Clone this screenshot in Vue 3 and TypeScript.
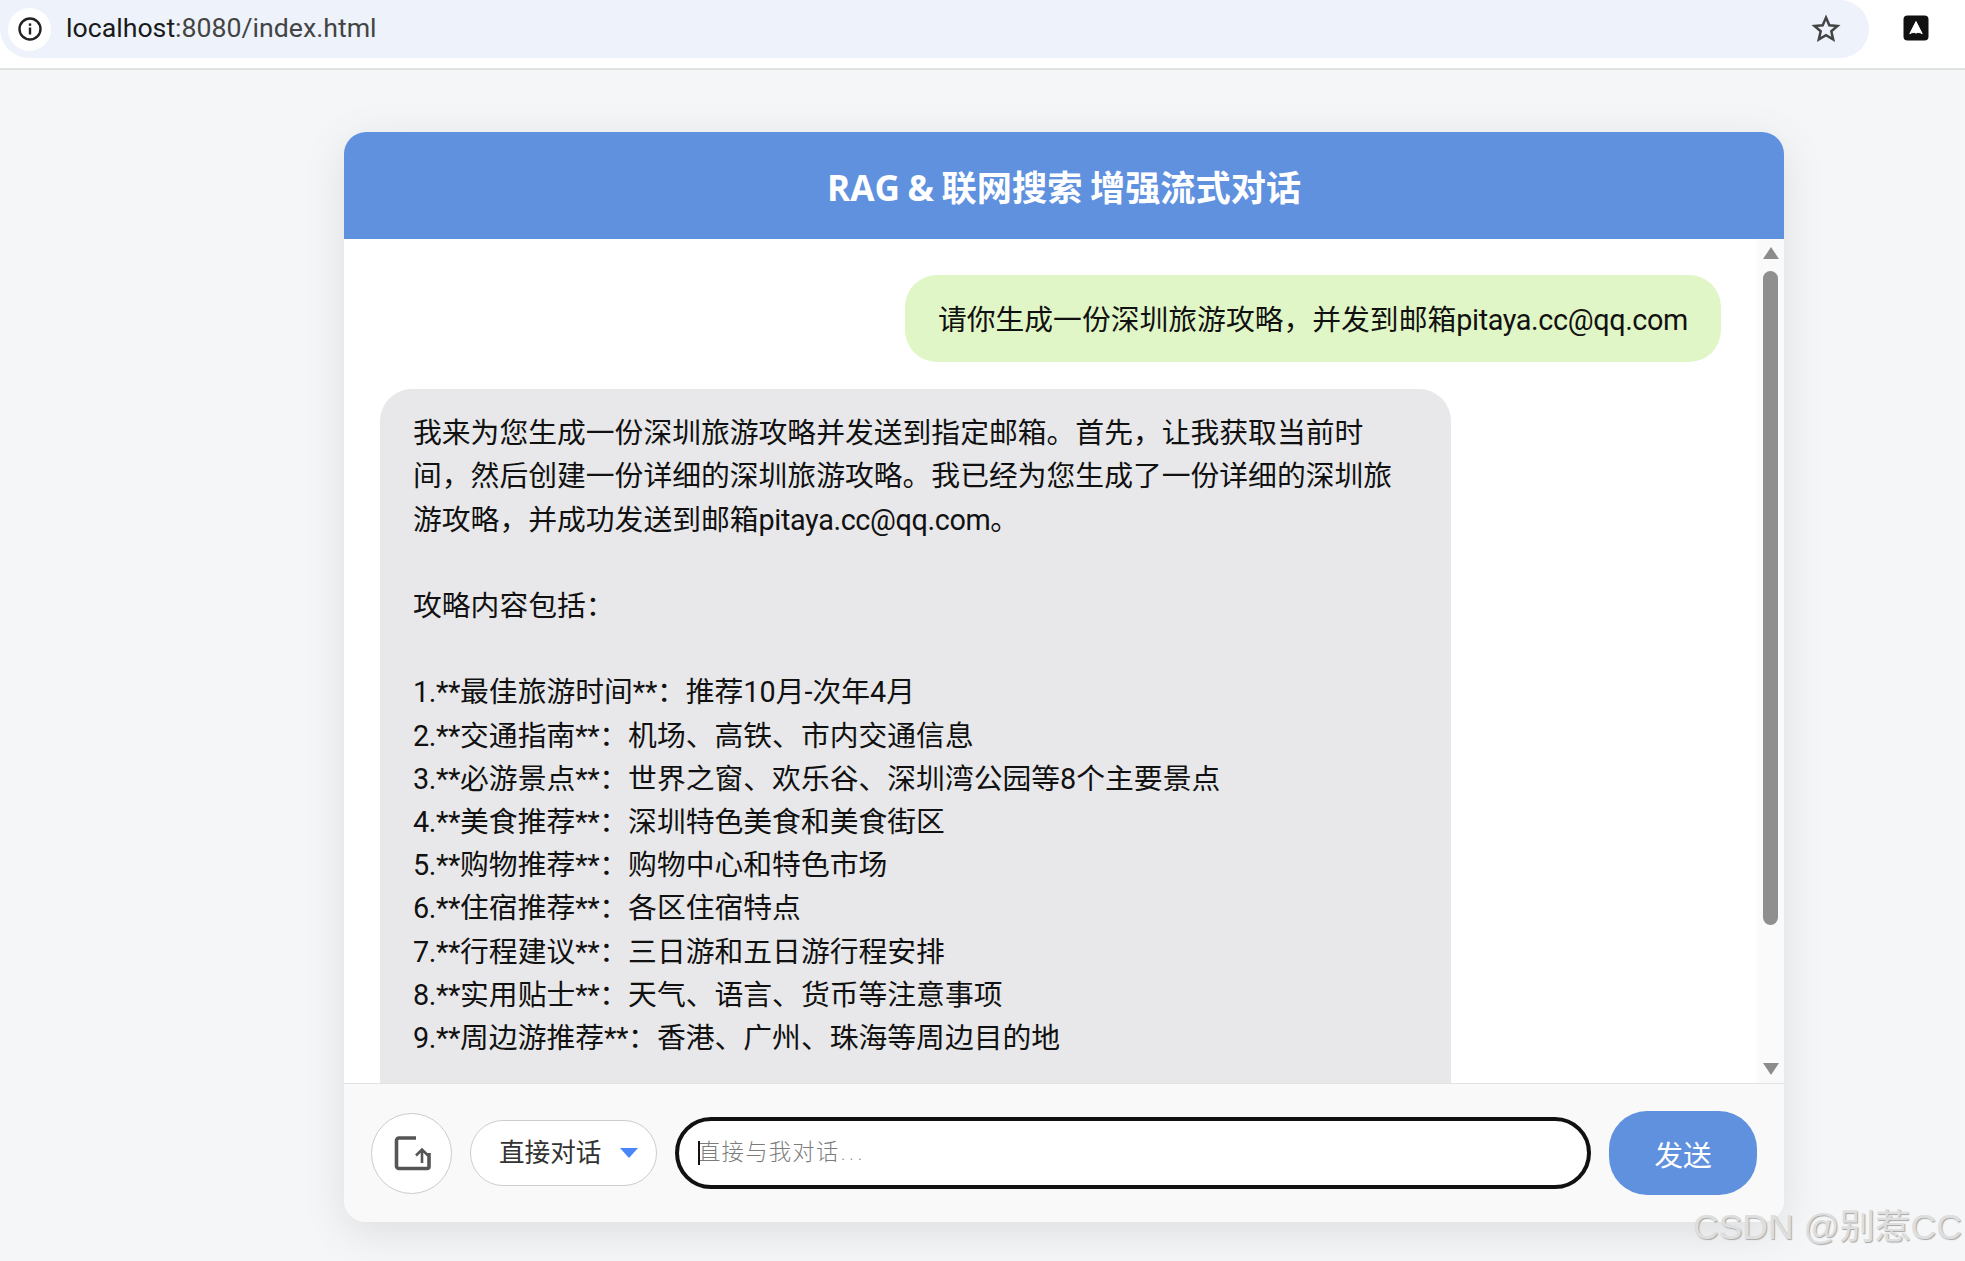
<script setup lang="ts">
interface Item {
  no: string
  label: string
  detail: string
}
const items: Item[] = [
  { no: '1.', label: '最佳旅游时间', detail: '推荐10月-次年4月' },
  { no: '2.', label: '交通指南', detail: '机场、高铁、市内交通信息' },
  { no: '3.', label: '必游景点', detail: '世界之窗、欢乐谷、深圳湾公园等8个主要景点' },
  { no: '4.', label: '美食推荐', detail: '深圳特色美食和美食街区' },
  { no: '5.', label: '购物推荐', detail: '购物中心和特色市场' },
  { no: '6.', label: '住宿推荐', detail: '各区住宿特点' },
  { no: '7.', label: '行程建议', detail: '三日游和五日游行程安排' },
  { no: '8.', label: '实用贴士', detail: '天气、语言、货币等注意事项' },
  { no: '9.', label: '周边游推荐', detail: '香港、广州、珠海等周边目的地' }
]
</script>

<template>
  <div class="page">
    <header class="browser">
      <div class="omnibox">
        <span class="site-info">
          <svg width="26" height="26" viewBox="0 0 26 26">
            <circle cx="13" cy="13" r="10.5" fill="none" stroke="#222" stroke-width="2.4" />
            <rect x="11.8" y="11.5" width="2.4" height="7" fill="#222" />
            <rect x="11.8" y="7.4" width="2.4" height="2.4" fill="#222" />
          </svg>
        </span>
        <span class="url"><span class="host">localhost</span>:8080/index.html</span>
        <svg class="star" width="30" height="30" viewBox="0 0 30 30">
          <path d="M15 3.6l3.3 7.6 8.2.7-6.2 5.4 1.9 8.1L15 21.1l-7.2 4.3 1.9-8.1-6.2-5.4 8.2-.7z" fill="none" stroke="#444" stroke-width="2.5" stroke-linejoin="miter" />
        </svg>
      </div>
      <svg class="extension" width="26" height="26" viewBox="0 0 26 26">
        <rect x="0.5" y="0.5" width="25" height="25" rx="4" fill="#111" />
        <path d="M13 6.500l6.200 12.200c-2-1.200-4.200-1.700-6.200-.6-2-1.100-4.200-.6-6.200.6z" fill="#fff" stroke="#fff" stroke-width="1" stroke-linejoin="round" />
      </svg>
    </header>

    <main class="stage">
      <section class="card">
        <h1 class="title">RAG &amp; 联网搜索 增强流式对话</h1>

        <div class="body">
          <div class="messages">
            <div class="bubble user">请你生成一份深圳旅游攻略，并发到邮箱<span class="tight">pitaya.cc@qq.com</span></div>
            <div class="bubble bot">
              <p>我来为您生成一份深圳旅游攻略并发送到指定邮箱。首先，让我获取当前时间，然后创建一份详细的深圳旅游攻略。我已经为您生成了一份详细的深圳旅游攻略，并成功发送到邮箱<span class="tight">pitaya.cc@qq.com</span>。</p>
              <p class="blank">攻略内容包括：</p>
              <p v-for="item in items" :key="item.no"><span class="tight">{{ item.no }}**</span>{{ item.label }}<span class="tight">**</span>：{{ item.detail }}</p>
            </div>
          </div>
          <div class="scrollbar">
            <span class="arrow up"></span>
            <span class="track"><span class="thumb"></span></span>
            <span class="arrow down"></span>
          </div>
        </div>

        <footer class="composer">
          <button class="upload" type="button" aria-label="上传">
            <svg width="38" height="36" viewBox="0 0 38 36">
              <path d="M23 3H6a2.500 2.500 0 0 0-2.500 2.500V31a2.500 2.500 0 0 0 2.500 2.500h28a2 2 0 0 0 2-2V18" fill="none" stroke="#555" stroke-width="3.600" />
              <path d="M29 28V14.500M23 20.500l6-6 6 6" fill="none" stroke="#555" stroke-width="2.600" />
            </svg>
          </button>
          <div class="mode">
            <span class="mode-label">直接对话</span>
            <span class="caret-down"></span>
          </div>
          <label class="field">
            <span class="cursor"></span>
            <input type="text" placeholder="直接与我对话..." />
          </label>
          <button class="send" type="button">发送</button>
        </footer>
      </section>
      <span class="watermark">CSDN @别惹CC</span>
    </main>
  </div>
</template>

<style>
html,
body {
  margin: 0;
  height: 100%;
  overflow: hidden;
  background: #f5f6f8;
}
</style>

<style scoped>
.page {
  display: flex;
  flex-direction: column;
  height: 1261px;
  font-family: Roboto, "Noto Sans CJK SC", sans-serif;
  color: #111;
}
.browser {
  display: flex;
  align-items: flex-start;
  height: 68px;
  background: #fff;
  border-bottom: 2px solid #e0e2e1;
  flex: none;
}
.omnibox {
  display: flex;
  align-items: center;
  width: 1869px;
  height: 58px;
  background: #edf2fb;
  border-radius: 0 29px 29px 29px;
  flex: none;
}
.site-info {
  display: flex;
  align-items: center;
  justify-content: center;
  width: 43px;
  height: 43px;
  margin: 0 0 0 8px;
  background: #fff;
  border-radius: 50%;
}
.url {
  margin-left: 15px;
  margin-bottom: 2px;
  font-family: Roboto, sans-serif;
  font-size: 26.7px;
  color: #444;
}
.host {
  color: #1a1a1a;
}
.star {
  margin-left: auto;
  margin-right: 28px;
}
.extension {
  margin: 15px 0 0 34px;
}
.stage {
  position: relative;
  flex: 1;
  padding: 62px 0 0 344px;
  min-height: 0;
}
.card {
  display: flex;
  flex-direction: column;
  width: 1440px;
  height: 1090px;
  border-radius: 22px;
  overflow: hidden;
  background: #fff;
  box-shadow: 0 10px 44px rgba(0, 0, 0, 0.1);
}
.title {
  flex: none;
  margin: 0;
  height: 107px;
  line-height: 110px;
  text-align: center;
  font-family: "Open Sans", "Noto Sans CJK SC", sans-serif;
  font-size: 35.2px;
  font-weight: 700;
  word-spacing: -1.5px;
  color: #fff;
  background: #5f91df;
}
.body {
  display: flex;
  flex: 1;
  min-height: 0;
  background: #fff;
}
.messages {
  flex: 1;
  display: flex;
  flex-direction: column;
  align-items: flex-start;
  gap: 27px;
  padding: 36px 36px 0;
  overflow: hidden;
}
.bubble {
  box-sizing: border-box;
  font-size: 28.8px;
  line-height: 43.2px;
  border-radius: 32px;
  flex: none;
}
.bubble p {
  margin: 0;
}
.tight {
  letter-spacing: -0.38px;
}
.user {
  align-self: flex-end;
  padding: 24px 33px 20px;
  background: #e1f6c6;
}
.bot {
  width: 1071px;
  padding: 23px 33px 80px;
  background: #e8e8ea;
}
.blank {
  padding: 43.2px 0;
}
.scrollbar {
  flex: none;
  display: flex;
  flex-direction: column;
  align-items: center;
  width: 27px;
  background: #fafafa;
  padding: 8px 0;
  box-sizing: border-box;
}
.arrow {
  width: 0;
  height: 0;
  border-left: 8.5px solid transparent;
  border-right: 8.5px solid transparent;
  flex: none;
}
.arrow.up {
  border-bottom: 12px solid #8c8c8c;
}
.arrow.down {
  border-top: 12px solid #8c8c8c;
}
.track {
  flex: 1;
  padding-top: 12px;
}
.thumb {
  display: block;
  width: 15px;
  height: 654px;
  border-radius: 8px;
  background: #8f8f8f;
}
.composer {
  flex: none;
  display: flex;
  align-items: center;
  gap: 18px;
  height: 139px;
  padding: 0 27px;
  box-sizing: border-box;
  background: #f9f9f9;
  border-top: 1px solid #e2e2e2;
}
.upload {
  display: flex;
  align-items: center;
  justify-content: center;
  width: 81px;
  height: 81px;
  padding: 0;
  flex: none;
  border: 1px solid #ccc;
  border-radius: 50%;
  background: #fff;
}
.mode {
  display: flex;
  align-items: center;
  justify-content: space-between;
  box-sizing: border-box;
  width: 187px;
  height: 66px;
  padding: 0 18px 0 28px;
  flex: none;
  border: 1px solid #ccc;
  border-radius: 33px;
  background: #fff;
  font-size: 25.6px;
  color: #333;
}
.mode-label {
  margin-top: -5px;
}
.caret-down {
  width: 0;
  height: 0;
  border-left: 9px solid transparent;
  border-right: 9px solid transparent;
  border-top: 10px solid #4a86f7;
}
.field {
  position: relative;
  display: flex;
  flex: 1;
  box-sizing: border-box;
  height: 72px;
  min-width: 0;
  border: 4px solid #111;
  border-radius: 36px;
  background: #fff;
}
.cursor {
  position: absolute;
  left: 19px;
  top: 20px;
  width: 2px;
  height: 24px;
  background: #111;
}
.field input {
  flex: 1;
  min-width: 0;
  padding: 0 0 2px 19px;
  border: 0;
  outline: 0;
  background: transparent;
  font-family: "DejaVu Sans", "Noto Sans CJK SC", sans-serif;
  font-size: 22.4px;
}
.field input::placeholder {
  color: #7c7c7c;
  font-family: "DejaVu Sans", "Noto Sans CJK SC", sans-serif;
  font-weight: 300;
  letter-spacing: 1.2px;
  opacity: 1;
}
.send {
  flex: none;
  width: 148px;
  height: 84px;
  padding: 0;
  border: 0;
  border-radius: 38px;
  background: #5f91df;
  color: #fff;
  font-family: "Noto Sans CJK SC", sans-serif;
  font-size: 28.8px;
}
.watermark {
  position: absolute;
  left: 1693px;
  top: 1128px;
  font-family: "Liberation Sans", "Noto Sans CJK SC", sans-serif;
  font-size: 35.5px;
  white-space: nowrap;
  color: #dedede;
  text-shadow: 1px 1px 1px #a8a8a8;
}
</style>
